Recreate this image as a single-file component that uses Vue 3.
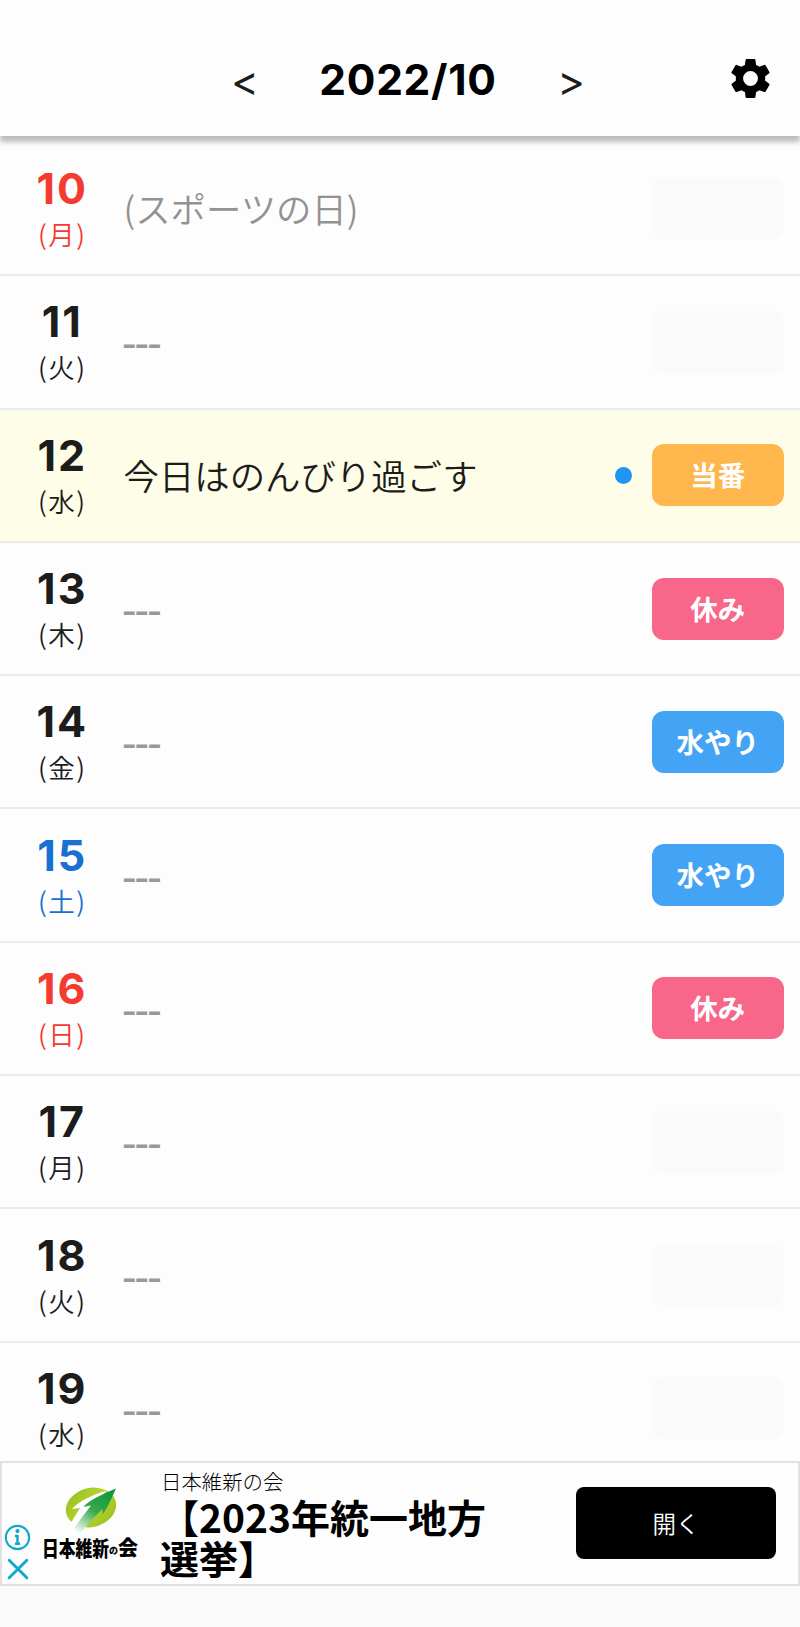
<template>
  <div class="app">
    <header class="header">
      <div class="header-side"></div>
      <nav class="month-nav">
        <button class="arrow">&lt;</button>
        <h1 class="month">2022/10</h1>
        <button class="arrow">&gt;</button>
      </nav>
      <button class="settings" aria-label="設定">
        <svg viewBox="0 0 24 24">
          <path fill-rule="evenodd" d="M19.43 12.98c.04-.32.07-.64.07-.98s-.03-.66-.07-.98l2.11-1.65c.19-.15.24-.42.12-.64l-2-3.46c-.12-.22-.39-.3-.61-.22l-2.49 1c-.52-.4-1.08-.73-1.69-.98l-.38-2.65C14.46 2.18 14.25 2 14 2h-4c-.25 0-.46.18-.49.42l-.38 2.65c-.61.25-1.17.59-1.69.98l-2.49-1c-.23-.09-.49 0-.61.22l-2 3.46c-.13.22-.07.49.12.64l2.11 1.65c-.04.32-.07.65-.07.98s.03.66.07.98l-2.11 1.65c-.19.15-.24.42-.12.64l2 3.46c.12.22.39.3.61.22l2.49-1c.52.4 1.08.73 1.69.98l.38 2.65c.03.24.24.42.49.42h4c.25 0 .46-.18.49-.42l.38-2.65c.61-.25 1.17-.59 1.69-.98l2.49 1c.23.09.49 0 .61-.22l2-3.46c.12-.22.07-.49-.12-.64l-2.11-1.65zM12 15.8a3.8 3.8 0 1 1 0-7.6 3.8 3.8 0 0 1 0 7.6z" />
        </svg>
      </button>
    </header>

    <!-- 日ごとの予定 -->
    <main class="days">
      <div v-for="d in days" :key="d.day" class="day" :class="{ today: d.today }">
        <div class="date" :class="d.color">
          <span class="num">{{ d.day }}</span>
          <span class="week">({{ d.week }})</span>
        </div>
        <div v-if="d.memo" class="memo" :class="{ holiday: d.holiday }">{{ d.memo }}</div>
        <div v-else class="memo empty">---</div>
        <span v-if="d.dot" class="dot"></span>
        <div class="badge" :class="d.badgeType">{{ d.badge }}</div>
      </div>
    </main>

    <!-- 広告 -->
    <aside class="ad">
      <div class="ad-marks">
        <svg viewBox="0 0 26 26">
          <circle cx="13" cy="13" r="11.2" />
          <path class="stem" d="M13 10.5v9.5M10.5 11.5h2.5M10.5 19h5" />
          <circle class="fill" cx="13" cy="6.8" r="2" />
        </svg>
        <svg viewBox="0 0 26 26">
          <path class="cross" d="M5 5l17 17M22 5L5 22" />
        </svg>
      </div>
      <svg class="ad-logo" viewBox="0 0 100 78">
        <defs>
          <linearGradient id="leaf" x1="0" y1="0" x2="1" y2="1">
            <stop offset="0" stop-color="#8fbf1c" />
            <stop offset="0.5" stop-color="#b9d330" />
            <stop offset="1" stop-color="#93c01f" />
          </linearGradient>
          <linearGradient id="arrow" x1="0.8" y1="0.1" x2="0.15" y2="1">
            <stop offset="0" stop-color="#119a3c" />
            <stop offset="0.45" stop-color="#39a94c" />
            <stop offset="1" stop-color="#ffffff" />
          </linearGradient>
        </defs>
        <ellipse cx="51" cy="22.5" rx="25.5" ry="19.5" transform="rotate(-14 51 22.5)" fill="url(#leaf)" />
        <path d="M66 6C54 9 39 16 32 24l8-1-14 23 9 3 18-25z" fill="#fff" />
        <path d="M76 3.5C65 8 51 14 43 22l8-1.5L30 48l11-1 21-23 1 5c6-9 9-17 13-25.5z" fill="url(#arrow)" />
        <text class="brush" x="2" y="71" textLength="67" lengthAdjust="spacingAndGlyphs">日本維新</text>
        <text class="brush small" x="69" y="69">の</text>
        <text class="brush" x="78" y="70" textLength="20" lengthAdjust="spacingAndGlyphs">会</text>
      </svg>
      <div class="ad-body">
        <div class="ad-name">日本維新の会</div>
        <div class="ad-title">【2023年統一地方選挙】</div>
      </div>
      <button class="ad-open">開く</button>
    </aside>
  </div>
</template>

<script setup>
import { ref } from 'vue'

const days = ref([
  { day: 10, week: '月', color: 'red', memo: '(スポーツの日)', holiday: true },
  { day: 11, week: '火' },
  { day: 12, week: '水', memo: '今日はのんびり過ごす', today: true, dot: true, badge: '当番', badgeType: 'duty' },
  { day: 13, week: '木', badge: '休み', badgeType: 'off' },
  { day: 14, week: '金', badge: '水やり', badgeType: 'water' },
  { day: 15, week: '土', color: 'blue', badge: '水やり', badgeType: 'water' },
  { day: 16, week: '日', color: 'red', badge: '休み', badgeType: 'off' },
  { day: 17, week: '月' },
  { day: 18, week: '火' },
  { day: 19, week: '水' }
])
</script>

<style>
body{
  background:#fafafa;
}
</style>

<style scoped>
.app{
  height:1627px;
  display:flex;
  flex-direction:column;
  box-sizing:border-box;
  padding-bottom:41px;
  overflow:hidden;
  background:#fafafa;
  color:#1c1c1c;
  font-family:'Noto Sans CJK JP', sans-serif;
  font-weight:350;
}

button{
  border:0;
  padding:0;
  background:none;
  font:inherit;
  color:inherit;
}

.header{
  position:relative;
  z-index:2;
  flex:none;
  height:136px;
  box-sizing:border-box;
  padding:22px 26px 0 16px;
  display:grid;
  grid-template-columns:76px 1fr 50px;
  align-items:center;
  background:#fdfdfd;
  box-shadow:0 6px 5px rgba(0,0,0,0.26);
}

.month-nav{
  display:flex;
  align-items:center;
  justify-content:center;
  gap:60px;
}

.month{
  margin:0;
  padding-top:1px;
  color:#000;
  font-family:Inter, sans-serif;
  font-size:42.5px;
  font-weight:650;
  line-height:50px;
  letter-spacing:0.7px;
}

.arrow{
  width:29px;
  padding-top:3px;
  font-family:Inter, sans-serif;
  font-size:42px;
  font-weight:400;
  line-height:50px;
}

.settings{
  justify-self:end;
  width:47px;
  height:47px;
  margin-top:-1px;
}

.settings svg{
  display:block;
  width:47px;
  height:47px;
  fill:#000;
}

.days{
  flex:1;
  min-height:0;
  padding-top:7px;
  overflow:hidden;
  background:#fdfdfd;
}

.day{
  height:133.3px;
  box-sizing:border-box;
  padding:0 16.5px 0 24px;
  display:flex;
  align-items:center;
  border-bottom:2px solid #ebebed;
}

.today{
  background:#fefde7;
}

.date{
  width:75px;
  padding-top:2px;
  display:flex;
  flex-direction:column;
  align-items:center;
}

.num{
  margin-right:-1.5px;
  font-family:Inter, sans-serif;
  font-size:43px;
  font-weight:650;
  line-height:48px;
  letter-spacing:2px;
}

.week{
  margin-right:-1.5px;
  font-size:26.5px;
  line-height:43px;
  letter-spacing:1.5px;
}

.red{
  color:#f43b30;
}

.blue{
  color:#1870d2;
}

.memo{
  flex:1;
  margin-left:24.5px;
  padding-bottom:2px;
  font-size:35.4px;
  line-height:51px;
  white-space:nowrap;
}

.holiday{
  color:#929292;
}

.empty{
  margin-left:24px;
  padding:6px 0 0;
  color:#999;
  font-family:Roboto, sans-serif;
  font-size:45.5px;
  font-weight:400;
}

.dot{
  width:17px;
  height:17px;
  margin-right:20px;
  border-radius:50%;
  background:#2094f3;
}

.badge{
  width:131.5px;
  height:62px;
  border-radius:12px;
  background:#fafafa;
  color:#fff;
  font-size:27.5px;
  font-weight:700;
  line-height:61px;
  text-align:center;
}

.duty{
  background:#ffb64d;
}

.off{
  background:#f86689;
}

.water{
  background:#43a4f5;
}

.ad{
  position:relative;
  flex:none;
  height:125px;
  box-sizing:border-box;
  padding:0 22px 0 38px;
  display:flex;
  align-items:center;
  border:2px solid #e2e2e2;
  background:#fdfdfd;
  color:#000;
}

.ad-marks{
  position:absolute;
  left:2px;
  top:61px;
  display:flex;
  flex-direction:column;
  gap:4px;
}

.ad-marks svg{
  display:block;
  width:27px;
  height:27px;
  fill:none;
  stroke:#10a8cd;
  stroke-width:2;
}

.ad-marks .stem{
  stroke-width:2.4;
}

.ad-marks .fill{
  fill:#10a8cd;
  stroke:none;
}

.ad-marks .cross{
  stroke-width:2.8;
  stroke-linecap:round;
}

.ad-logo{
  flex:none;
  width:100px;
  height:78px;
}

.brush{
  font-family:'Noto Sans CJK JP', sans-serif;
  font-size:21px;
  font-weight:900;
}

.brush.small{
  font-size:9px;
}

.ad-body{
  width:340px;
  margin-left:20px;
  padding-bottom:2px;
}

.ad-name{
  margin-left:1px;
  font-size:20.4px;
  font-weight:300;
  line-height:29px;
}

.ad-title{
  font-size:39px;
  font-weight:700;
  line-height:41px;
}

.ad-open{
  width:200px;
  height:72px;
  margin:0 0 1px auto;
  border-radius:8px;
  background:#000;
  color:#fff;
  font-size:23.5px;
}
</style>
